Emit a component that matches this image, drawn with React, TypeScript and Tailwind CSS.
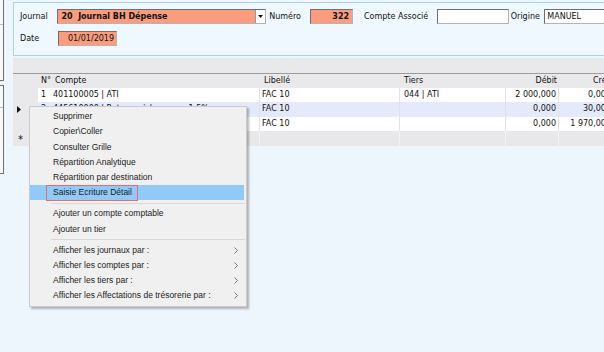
import React from 'react';

type Row = {
  no: string;
  compte: string;
  libelle: string;
  tiers: string;
  debit: string;
  credit: string;
  selected?: boolean;
};

const rows: Row[] = [
  { no: '1', compte: '401100005 | ATI', libelle: 'FAC 10', tiers: '044 | ATI', debit: '2 000,000', credit: '0,000' },
  { no: '2', compte: '445610000 | Retenue à la source 1,5%', libelle: 'FAC 10', tiers: '', debit: '0,000', credit: '30,000', selected: true },
  { no: '3', compte: '401100005 | ATI', libelle: 'FAC 10', tiers: '', debit: '0,000', credit: '1 970,000' },
];

type MenuItem = { label: string; sub?: boolean; active?: boolean } | 'sep';

const menu: MenuItem[] = [
  { label: 'Supprimer' },
  { label: 'Copier\\Coller' },
  { label: 'Consulter Grille' },
  { label: 'Répartition Analytique' },
  { label: 'Répartition par destination' },
  { label: 'Saisie Ecriture Détail', active: true },
  'sep',
  { label: 'Ajouter un compte comptable' },
  { label: 'Ajouter un tier' },
  'sep',
  { label: 'Afficher les journaux par :', sub: true },
  { label: 'Afficher les comptes par :', sub: true },
  { label: 'Afficher les tiers par :', sub: true },
  { label: 'Afficher les Affectations de trésorerie par :', sub: true },
];

const sunken = 'h-[15px] border border-[#b4b4b4] border-t-[#6f6f6f] border-l-[#6f6f6f] flex items-center';

function Chevron() {
  return (
    <svg width="4" height="7" viewBox="0 0 4 7" aria-hidden>
      <path d="M0.5 0.5 L3.5 3.5 L0.5 6.5" fill="none" stroke="#6a6a6a" strokeWidth="0.9" />
    </svg>
  );
}

export default function App() {
  return (
    <div className="relative w-[604px] h-[352px] overflow-hidden bg-[#eef6fd] text-[#111] font-['DejaVu_Sans',sans-serif] text-[8px] flex">
      {/* left panels, mostly off screen */}
      <div className="w-[4px] shrink-0 flex flex-col">
        <div className="h-[81px] bg-[#f7f7f7] border-r border-b border-[#6e6e6e] pt-[24px]">
          <div className="h-px bg-[#9cc8ef]" />
        </div>
        <div className="mt-[4px] h-[89px] bg-[#f7f7f7] border-r border-t border-b border-[#6e6e6e] pt-[21px]">
          <div className="h-px bg-[#9cc8ef]" />
        </div>
      </div>

      <div className="ml-[9px] w-[620px] shrink-0 flex flex-col">
        {/* header */}
        <div className="mt-[2px] h-[54px] border border-r-0 border-[#a7d0f3] bg-[#eff7ff] pl-[6px] pt-[6px]">
          <div className="flex items-center h-[15px]">
            <span className="w-[38px]">Journal</span>
            <div className={`${sunken} w-[212px] bg-[#fb9d7c] justify-between`}>
              <span className="pl-[3px] font-bold whitespace-pre">20  Journal BH Dépense</span>
              <span className="w-[10px] h-[13px] bg-white border-l border-[#9a9a9a] flex items-center justify-center">
                <svg width="5" height="3" viewBox="0 0 5 3" aria-hidden>
                  <path d="M0 0 H5 L2.5 3 Z" fill="#111" />
                </svg>
              </span>
            </div>
            <span className="w-[44px] pl-[3px]">Numéro</span>
            <div className={`${sunken} w-[44px] bg-[#fb9d7c] justify-end pr-[3px] font-bold`}>322</div>
            <span className="w-[85px] pl-[11px]">Compte Associé</span>
            <div className={`${sunken} w-[73px] bg-white`} />
            <span className="w-[36px] pl-[2px]">Origine</span>
            <div className={`${sunken} w-[90px] bg-white pl-[2px]`}>MANUEL</div>
          </div>
          <div className="flex items-center h-[15px] mt-[7px]">
            <span className="w-[38px]">Date</span>
            <div className={`${sunken} w-[59px] bg-[#fb9d7c] justify-end pr-[2px]`}>01/01/2019</div>
          </div>
        </div>

        {/* toolbar band */}
        <div className="mt-[2px] h-[15px] bg-[#e9e9ec]" />

        {/* grid */}
        <div className="border-t border-[#9c9c9c]">
          <div className="flex h-[14px] items-center bg-[#e9e9ec]">
            <span className="w-[25px]" />
            <span className="w-[13px] pl-[3px]">N°</span>
            <span className="w-[209px] pl-[4px]">Compte</span>
            <span className="w-[140px] pl-[4px]">Libellé</span>
            <span className="w-[106px] pl-[4px]">Tiers</span>
            <span className="w-[53px] text-right pr-[2px]">Débit</span>
            <span className="w-[60px] text-right pr-[2px]">Crédit</span>
          </div>
          {rows.map((r) => (
            <div key={r.no} className="flex h-[14.3px] items-center">
              <span className="w-[25px] h-full bg-[#e9e9ec] flex items-center pl-[4px]">
                {r.selected && (
                  <svg width="4" height="7" viewBox="0 0 4 7" aria-hidden>
                    <path d="M0 0 L4 3.5 L0 7 Z" fill="#111" />
                  </svg>
                )}
              </span>
              <div className={`flex flex-1 h-full items-center ${r.selected ? 'bg-[#e4e9fc]' : 'bg-white'}`}>
                <span className="w-[13px] pl-[3px]">{r.no}</span>
                <span className="w-[209px] pl-[2px] h-full flex items-center border-r border-[#e2e2e2] whitespace-nowrap overflow-hidden">{r.compte}</span>
                <span className="w-[140px] pl-[2px] h-full flex items-center border-r border-[#e2e2e2]">{r.libelle}</span>
                <span className="w-[106px] pl-[4px] h-full flex items-center border-r border-[#e2e2e2]">{r.tiers}</span>
                <span className="w-[53px] h-full flex items-center justify-end pr-[2px] border-r border-[#e2e2e2]">{r.debit}</span>
                <span className="w-[60px] h-full flex items-center justify-end pr-[8px]">{r.credit}</span>
              </div>
            </div>
          ))}
          <div className="flex h-[15px] items-center bg-[#e8e8ea]">
            <span className="w-[25px] pl-[5px] text-[10px] leading-none pt-[3px]">*</span>
            <span className="w-[13px]" />
            <span className="w-[209px] h-full border-r border-[#f2f2f2]" />
            <span className="w-[140px] h-full border-r border-[#f2f2f2]" />
            <span className="w-[106px] h-full border-r border-[#f2f2f2]" />
            <span className="w-[53px] h-full border-r border-[#f2f2f2]" />
          </div>
        </div>
      </div>

      {/* context menu */}
      <div className="absolute left-[29px] top-[106px] w-[218px] bg-[#f0f0f0] border border-[#cbcbcb] shadow-[2px_2px_2px_rgba(0,0,0,0.28)] pt-[2px] pb-[3px] font-['Liberation_Sans',Arial,sans-serif] text-[8.5px] text-[#1b1b1b]">
        {menu.map((m, i) =>
          m === 'sep' ? (
            <div key={i} className="h-[6px] flex items-center pl-[21px] pr-[1px]">
              <div className="h-px w-full bg-[#d9d9d9]" />
            </div>
          ) : (
            <div
              key={i}
              className={`relative h-[15.2px] mr-[2px] pl-[23px] pr-[6px] flex items-center justify-between ${m.active ? 'bg-[#91c9f7]' : ''}`}
            >
              <span>{m.label}</span>
              {m.sub && <Chevron />}
              {m.active && (
                <span className="absolute left-[16px] top-0 w-[92px] h-[16px] border border-[#df6f7c]" />
              )}
            </div>
          )
        )}
      </div>
    </div>
  );
}
